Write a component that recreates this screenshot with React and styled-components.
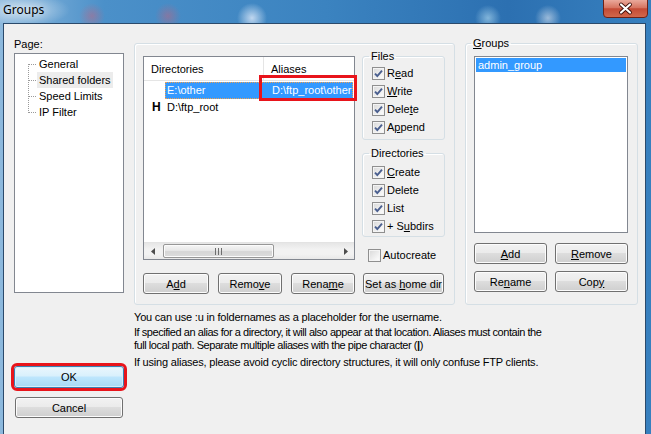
import styled, { createGlobalStyle } from "styled-components";

const Global = createGlobalStyle`
  html, body { margin: 0; padding: 0; }
  body {
    width: 651px;
    height: 434px;
    overflow: hidden;
    font-family: "Liberation Sans", Arial, sans-serif;
    font-size: 11px;
    color: #000;
  }
  * { box-sizing: border-box; }
`;

const Window = styled.div`
  width: 651px;
  height: 434px;
  display: flex;
  flex-direction: column;
  overflow: hidden;
  background:
    radial-gradient(ellipse 46px 16px at 24px 10px, rgba(255, 255, 255, 0.55), transparent),
    radial-gradient(circle 13px at 92px 16px, rgba(205, 95, 120, 0.45), transparent),
    radial-gradient(circle 13px at 168px 16px, rgba(205, 95, 120, 0.45), transparent),
    radial-gradient(circle 15px at 252px 18px, rgba(235, 242, 255, 0.75), transparent),
    radial-gradient(circle 13px at 488px 18px, rgba(185, 225, 245, 0.6), transparent),
    radial-gradient(circle 13px at 548px 18px, rgba(225, 232, 242, 0.6), transparent),
    linear-gradient(90deg, #8db9dd 0%, #4b90c9 16%, #3b83c0 50%, #2c70b1 78%, #3780bf 100%);
`;

const TitleBar = styled.div`
  height: 23px;
  flex: none;
  display: flex;
  align-items: flex-start;
  padding-left: 3px;
`;

const Title = styled.span`
  font-family: "Noto Sans", "Open Sans", sans-serif;
  font-size: 12px;
  line-height: 20px;
  color: #000;
  text-shadow: 0 0 8px rgba(255, 255, 255, 0.9);
`;

const CloseButton = styled.div`
  margin-left: auto;
  margin-right: 3px;
  width: 45px;
  height: 18px;
  display: flex;
`;

const Client = styled.div`
  flex: 1;
  margin: 0 5px 0 3px;
  border: 1px solid #2b4a6b;
  border-bottom: none;
  background: #f0f0f0;
  display: flex;
`;

const LeftCol = styled.div`
  width: 110px;
  margin-left: 10px;
  padding-top: 14px;
  display: flex;
  flex-direction: column;
`;

const PageLabel = styled.div`
  line-height: 13px;
  margin-bottom: 2px;
`;

const Tree = styled.div`
  height: 240px;
  border: 1px solid #828790;
  background: #fff;
  padding-top: 2px;
  display: flex;
  align-items: flex-start;
`;

const TreeItems = styled.div`
  display: flex;
  flex-direction: column;
  align-items: flex-start;
`;

const TreeItem = styled.div`
  height: 16px;
  line-height: 16px;
  padding: 0 2px;
  background: ${(p) => (p.$selected ? "#ececec" : "transparent")};
`;

const OkButtonWrap = styled.div`
  margin-top: 73px;
`;

const RightCol = styled.div`
  margin-left: 10px;
  padding-top: 12px;
  display: flex;
  flex-direction: column;
`;

const TopRow = styled.div`
  display: flex;
  align-items: flex-start;
  gap: 10px;
`;

const MainPanel = styled.div`
  margin-top: 7px;
  width: 321px;
  height: 262px;
  border: 1px solid #d5dfe5;
  border-radius: 3px;
  box-shadow: inset 1px 1px 0 #fff;
  padding: 5px 10px 0 8px;
  display: grid;
  grid-template-columns: 212px 82px;
  grid-template-rows: 215px auto;
  column-gap: 7px;
  row-gap: 9px;
`;

const List = styled.div`
  margin-top: 7px;
  height: 204px;
  border: 1px solid #828790;
  background: #fff;
  display: flex;
  flex-direction: column;
`;

const Header = styled.div`
  height: 24px;
  flex: none;
  display: grid;
  grid-template-columns: 120px 1fr;
  border-bottom: 1px solid #e5e5e5;
`;

const HeaderCell = styled.div`
  padding: 2px 0 0 ${(p) => p.$pad}px;
  line-height: 21px;
  border-right: ${(p) => (p.$sep ? "1px solid #e5e5e5" : "none")};
`;

const Rows = styled.div`
  padding-top: 1px;
  display: flex;
  flex-direction: column;
`;

const Row = styled.div`
  height: 17px;
  display: flex;
`;

const Indicator = styled.div`
  width: 21px;
  flex: none;
  padding-left: 8px;
  font-size: 12px;
  font-weight: bold;
  line-height: 17px;
`;

const RowBody = styled.div`
  flex: 1;
  display: grid;
  grid-template-columns: 99px 1fr;
  line-height: 15px;
  color: ${(p) => (p.$selected ? "#fff" : "#000")};
  background: ${(p) => (p.$selected ? "#3399ff" : "transparent")};
  border: 1px dotted ${(p) => (p.$selected ? "#f0a050" : "transparent")};
  margin-right: 1px;
`;

const Cell = styled.div`
  padding-left: ${(p) => p.$pad}px;
  white-space: nowrap;
  overflow: visible;
  position: relative;
`;

const Annotation = styled.div`
  position: absolute;
  top: -8px;
  bottom: -3px;
  left: -6px;
  right: -5px;
  border: 3px solid #e8141b;
  pointer-events: none;
`;

const HScroll = styled.div`
  margin-top: auto;
  height: 17px;
  flex: none;
  display: flex;
  align-items: center;
  background: linear-gradient(#e6e6e6, #f2f2f2 40%, #f2f2f2 70%, #e8e8e8);
  border-top: 1px solid #e3e3e3;
`;

const ScrollArrow = styled.div`
  width: 17px;
  height: 16px;
  flex: none;
  display: flex;
  align-items: center;
  justify-content: center;
`;

const Track = styled.div`
  flex: 1;
  height: 16px;
  display: flex;
  align-items: center;
  padding-left: 2px;
`;

const Thumb = styled.div`
  width: 111px;
  height: 14px;
  border: 1px solid #979797;
  border-radius: 2px;
  background: linear-gradient(#f5f5f5, #e8e8e8 45%, #d6d6d6 55%, #dcdcdc);
  box-shadow: inset 0 0 0 1px #fbfbfb;
  display: flex;
  align-items: center;
  justify-content: center;
`;

const SideCol = styled.div`
  display: flex;
  flex-direction: column;
`;

const Group = styled.fieldset`
  margin: ${(p) => p.$mt || 0}px 0 0 0;
  width: 83px;
  border: 1px solid #d5dfe5;
  border-radius: 3px;
  box-shadow: inset 1px 1px 0 #fff;
  padding: ${(p) => p.$pt || 1}px 0 ${(p) => p.$pb || 3}px 9px;
  display: flex;
  flex-direction: column;
`;

const Legend = styled.legend`
  padding: 0 2px;
  margin-left: -3px;
  line-height: 14px;
`;

const CheckRow = styled.label`
  height: 18px;
  display: flex;
  align-items: center;
  gap: 2px;
  padding-left: ${(p) => p.$indent || 0}px;
  margin-top: ${(p) => p.$mt || 0}px;
`;

const Box = styled.span`
  width: 13px;
  height: 13px;
  flex: none;
  border: 1px solid #8f8f8f;
  background: linear-gradient(135deg, #d8d8d8, #f4f4f4 70%, #fdfdfd);
  box-shadow: inset 0 0 0 1px #f4f4f4;
  display: flex;
  align-items: center;
  justify-content: center;
`;

const ButtonRow = styled.div`
  display: flex;
  justify-content: space-between;
  align-items: flex-start;
`;

const Button = styled.button`
  width: ${(p) => p.$w}px;
  height: ${(p) => p.$h || 21}px;
  margin: ${(p) => p.$m || 0};
  padding: 0;
  font-family: "Liberation Sans", Arial, sans-serif;
  font-size: 11px;
  color: #000;
  border: 1px solid #707070;
  border-radius: 3px;
  background: linear-gradient(#f2f2f2 0%, #ebebeb 45%, #dddddd 50%, #cfcfcf 100%);
  box-shadow: inset 0 0 0 1px #fcfcfc;
  white-space: nowrap;
`;

const DefaultButton = styled(Button)`
  border-color: #3c7fb1;
  background: linear-gradient(#eaf6fd 0%, #d9f0fc 45%, #bee6fd 50%, #a7d9f5 100%);
  box-shadow: inset 0 0 0 1px #d6eefb;
  outline: 3px solid #e8141b;
`;

const GroupsPanel = styled.fieldset`
  margin: 0;
  width: 173px;
  height: 269px;
  border: 1px solid #d5dfe5;
  border-radius: 3px;
  box-shadow: inset 1px 1px 0 #fff;
  padding: 6px 9px 0 8px;
  display: flex;
  flex-direction: column;
`;

const GroupList = styled.div`
  height: 177px;
  border: 1px solid #828790;
  background: #fff;
  padding: 1px;
`;

const GroupItem = styled.div`
  height: 14px;
  line-height: 14px;
  padding-left: 2px;
  color: ${(p) => (p.$selected ? "#fff" : "#000")};
  background: ${(p) => (p.$selected ? "#3399ff" : "transparent")};
`;

const GroupButtons = styled.div`
  margin-top: 10px;
  display: grid;
  grid-template-columns: 1fr 1fr;
  column-gap: 8px;
  row-gap: 7px;
`;

const Notes = styled.div`
  padding-top: 6px;
  display: flex;
  flex-direction: column;
`;

const Note = styled.p`
  margin: ${(p) => p.$mt || 0}px 0 0 0;
  line-height: 13px;
  letter-spacing: ${(p) => (p.$tight ? -0.45 : -0.2)}px;
`;

const Pipe = styled.b`
  font-weight: bold;
`;

const U = styled.span`
  text-decoration: underline;
`;

function Check({ label, checked = true, indent, mt }) {
  return (
    <CheckRow $indent={indent} $mt={mt}>
      <Box>
        {checked && (
          <svg width="9" height="9" viewBox="0 0 9 9">
            <path d="M1 4.6 L3.3 7 L8 1.6" fill="none" stroke="#4a5f8f" strokeWidth="1.9" />
          </svg>
        )}
      </Box>
      <span>{label}</span>
    </CheckRow>
  );
}

export default function App() {
  return (
    <Window>
      <Global />
      <TitleBar>
        <Title>Groups</Title>
        <CloseButton>
          <svg width="45" height="18" viewBox="0 0 45 18">
            <defs>
              <linearGradient id="closeGrad" x1="0" y1="0" x2="0" y2="1">
                <stop offset="0" stopColor="#eaa99b" />
                <stop offset="0.45" stopColor="#d6735f" />
                <stop offset="0.5" stopColor="#c44a35" />
                <stop offset="1" stopColor="#d3694c" />
              </linearGradient>
            </defs>
            <path d="M0.5 0 V14 a3.5 3.5 0 0 0 3.5 3.5 H41 a3.5 3.5 0 0 0 3.5 -3.5 V0" fill="url(#closeGrad)" stroke="#6d2218" />
            <path d="M18 4.5 L27 12.5 M27 4.5 L18 12.5" stroke="#3b0d08" strokeWidth="3.8" strokeLinecap="round" />
            <path d="M18 4.5 L27 12.5 M27 4.5 L18 12.5" stroke="#fff" strokeWidth="2.2" strokeLinecap="round" />
          </svg>
        </CloseButton>
      </TitleBar>

      <Client>
        <LeftCol>
          <PageLabel>Page:</PageLabel>
          <Tree>
            <svg width="22" height="64" viewBox="0 0 22 64">
              <path
                d="M13.5 8 V57 M14 8.5 H22 M14 24.5 H22 M14 40.5 H22 M14 56.5 H22"
                stroke="#9a9a9a"
                strokeDasharray="1 1"
                fill="none"
              />
            </svg>
            <TreeItems>
              <TreeItem>General</TreeItem>
              <TreeItem $selected>Shared folders</TreeItem>
              <TreeItem>Speed Limits</TreeItem>
              <TreeItem>IP Filter</TreeItem>
            </TreeItems>
          </Tree>
          <OkButtonWrap>
            <DefaultButton $w={110} $h={22}>OK</DefaultButton>
          </OkButtonWrap>
          <Button $w={108} $m="9px 1px 0">Cancel</Button>
        </LeftCol>

        <RightCol>
          <TopRow>
            <MainPanel>
              <List>
                <Header>
                  <HeaderCell $pad={7} $sep>Directories</HeaderCell>
                  <HeaderCell $pad={7}>Aliases</HeaderCell>
                </Header>
                <Rows>
                  <Row>
                    <Indicator />
                    <RowBody $selected>
                      <Cell $pad={1}>E:\other</Cell>
                      <Cell $pad={7}>
                        D:\ftp_root\other
                        <Annotation />
                      </Cell>
                    </RowBody>
                  </Row>
                  <Row>
                    <Indicator>H</Indicator>
                    <RowBody>
                      <Cell $pad={1}>D:\ftp_root</Cell>
                      <Cell $pad={7} />
                    </RowBody>
                  </Row>
                </Rows>
                <HScroll>
                  <ScrollArrow>
                    <svg width="4" height="7" viewBox="0 0 4 7">
                      <path d="M4 0 V7 L0 3.5 Z" fill="#4d4d4d" />
                    </svg>
                  </ScrollArrow>
                  <Track>
                    <Thumb>
                      <svg width="7" height="7" viewBox="0 0 7 7">
                        <path d="M0.5 0 V7 M3.5 0 V7 M6.5 0 V7" stroke="#6e6e6e" />
                      </svg>
                    </Thumb>
                  </Track>
                  <ScrollArrow>
                    <svg width="4" height="7" viewBox="0 0 4 7">
                      <path d="M0 0 V7 L4 3.5 Z" fill="#4d4d4d" />
                    </svg>
                  </ScrollArrow>
                </HScroll>
              </List>

              <SideCol>
                <Group>
                  <Legend>Files</Legend>
                  <Check label={<>R<U>e</U>ad</>} />
                  <Check label={<><U>W</U>rite</>} />
                  <Check label={<>Dele<U>t</U>e</>} />
                  <Check label={<>A<U>p</U>pend</>} />
                </Group>
                <Group $mt={6} $pt={3} $pb={1}>
                  <Legend>Directories</Legend>
                  <Check label={<><U>C</U>reate</>} />
                  <Check label="Delete" />
                  <Check label="List" />
                  <Check label={<>+ S<U>u</U>bdirs</>} />
                </Group>
                <Check label="Autocreate" checked={false} indent={6} mt={9} />
              </SideCol>

              <ButtonRow>
                <Button $w={66}>A<U>d</U>d</Button>
                <Button $w={64}>Remo<U>v</U>e</Button>
                <Button $w={64}>Rena<U>m</U>e</Button>
              </ButtonRow>
              <Button $w={81} $m="0 0 0 1px">Set as <U>h</U>ome dir</Button>
            </MainPanel>

            <GroupsPanel>
              <Legend><U>G</U>roups</Legend>
              <GroupList>
                <GroupItem $selected>admin_group</GroupItem>
              </GroupList>
              <GroupButtons>
                <Button $w={73}><U>A</U>dd</Button>
                <Button $w={73}><U>R</U>emove</Button>
                <Button $w={73}>Re<U>n</U>ame</Button>
                <Button $w={73}>Cop<U>y</U></Button>
              </GroupButtons>
            </GroupsPanel>
          </TopRow>

          <Notes>
            <Note>You can use :u in foldernames as a placeholder for the username.</Note>
            <Note $mt={2} $tight>
              If specified an alias for a directory, it will also appear at that location. Aliases must contain the
              <br />
              full local path. Separate multiple aliases with the pipe character (<Pipe>|</Pipe>)
            </Note>
            <Note $mt={4}>If using aliases, please avoid cyclic directory structures, it will only confuse FTP clients.</Note>
          </Notes>
        </RightCol>
      </Client>
    </Window>
  );
}
